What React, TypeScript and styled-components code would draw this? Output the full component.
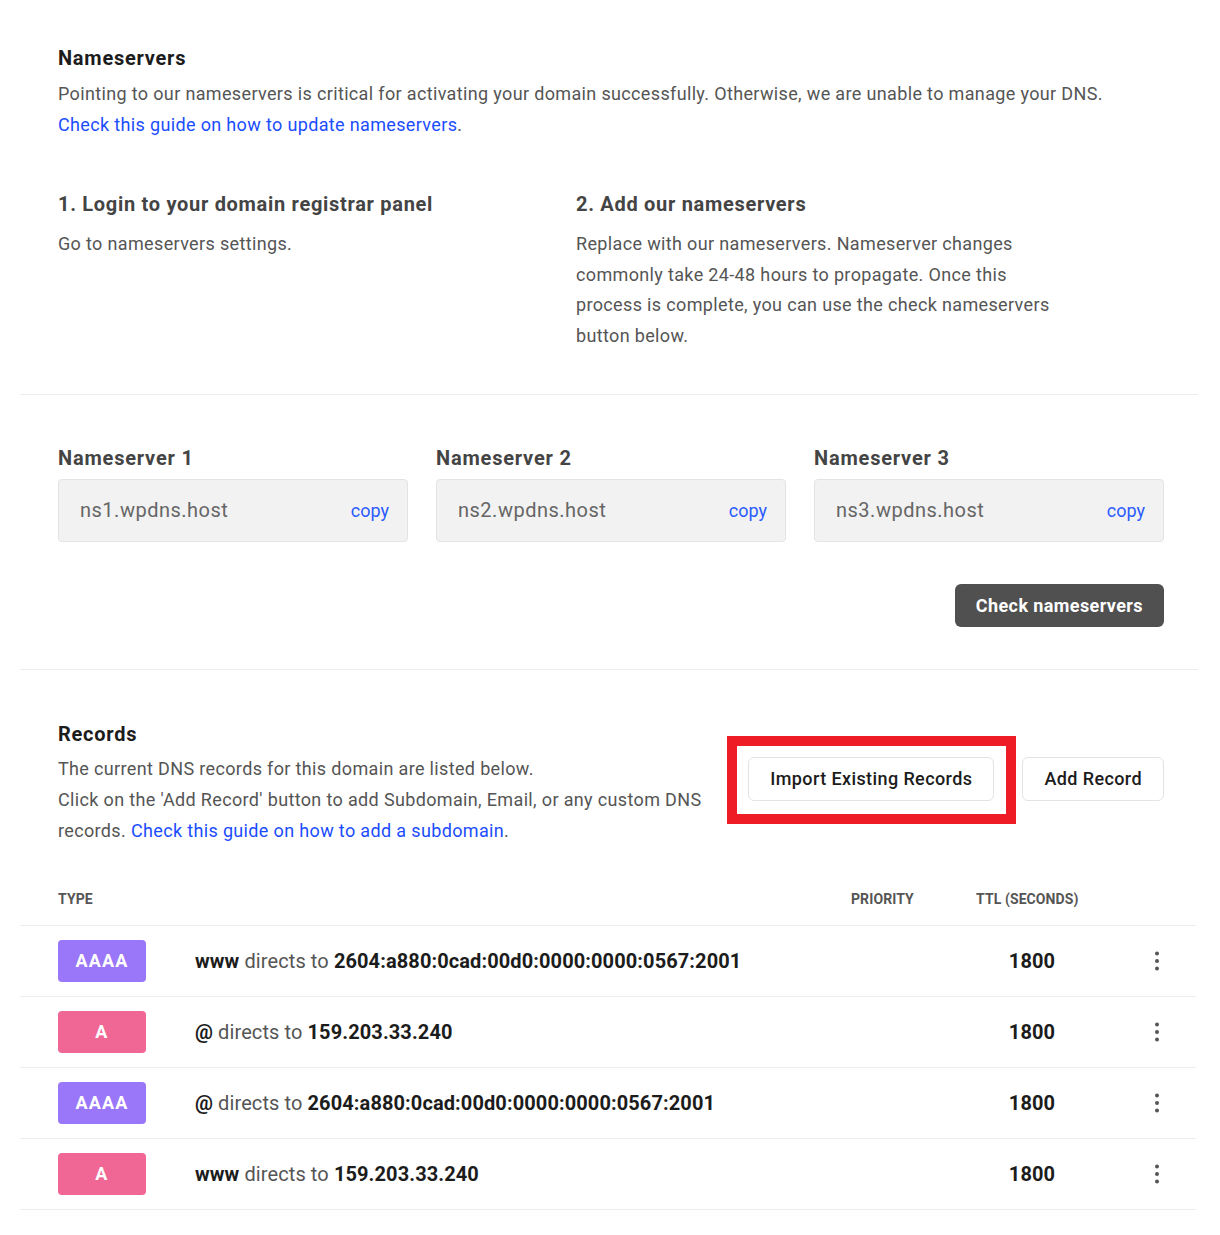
import React from "react";
import styled, { createGlobalStyle } from "styled-components";

const Global = createGlobalStyle`
  html, body { margin: 0; padding: 0; background: #fff; }
  body { font-family: Roboto, "Noto Sans", "Liberation Sans", sans-serif; -webkit-font-smoothing: antialiased; }
  * { box-sizing: border-box; }
`;

const Page = styled.div`
  padding: 46px 22px 40px 20px;
`;

const Section = styled.section`
  padding: 0 34px 0 38px;
`;

const Divider = styled.hr`
  border: none;
  border-top: 1px solid #ececec;
  margin: 0;
`;

const Title = styled.h2`
  margin: 0;
  font-size: 20px;
  line-height: 24px;
  font-weight: 700;
  letter-spacing: 0.75px;
  color: #1c1c1c;
`;

const Text = styled.p`
  margin: 8px 0 0;
  font-size: 18px;
  line-height: 31px;
  letter-spacing: 0.35px;
  color: #555;
`;

const Link = styled.a`
  color: #1b4dff;
  text-decoration: none;
`;

const Steps = styled.div`
  display: grid;
  grid-template-columns: 488px 488px;
  column-gap: 30px;
  padding: 52px 0 42px;
`;

const StepTitle = styled.h3`
  margin: 0;
  font-size: 20px;
  line-height: 24px;
  font-weight: 700;
  letter-spacing: 0.7px;
  color: #444;
`;

const StepText = styled.p`
  margin: 13px 0 0;
  font-size: 18px;
  line-height: 30.7px;
  letter-spacing: 0.35px;
  color: #555;
`;

const NsGrid = styled.div`
  display: grid;
  grid-template-columns: repeat(3, 1fr);
  column-gap: 28px;
  padding-top: 51px;
`;

const NsLabel = styled.div`
  font-size: 20px;
  line-height: 24px;
  font-weight: 700;
  letter-spacing: 0.8px;
  color: #444;
  margin-bottom: 9px;
`;

const NsBox = styled.div`
  height: 63px;
  display: flex;
  align-items: center;
  justify-content: space-between;
  padding: 0 18px 0 21px;
  background: #f2f2f2;
  border: 1px solid #e3e3e3;
  border-radius: 4px;
`;

const NsValue = styled.span`
  font-size: 20px;
  letter-spacing: 0.5px;
  color: #666;
`;

const CopyBtn = styled.button`
  border: none;
  background: none;
  padding: 0;
  font-family: inherit;
  font-size: 18px;
  color: #2b5bff;
  cursor: pointer;
`;

const ButtonRow = styled.div`
  display: flex;
  justify-content: flex-end;
  padding: 42px 0 42px;
`;

const DarkButton = styled.button`
  height: 43px;
  padding: 0 21px;
  border: none;
  border-radius: 6px;
  background: #505050;
  color: #fff;
  font-family: inherit;
  font-size: 18px;
  font-weight: 700;
  letter-spacing: 0.4px;
  cursor: pointer;
`;

const RecordsHead = styled.div`
  display: flex;
  align-items: center;
  justify-content: space-between;
  padding-top: 52px;
`;

const RecordsIntro = styled.div`
  flex: 1;
`;

const RecordsText = styled.p`
  margin: 7px 0 0;
  font-size: 18px;
  line-height: 31px;
  letter-spacing: 0.35px;
  color: #555;
  max-width: 690px;
`;

const Actions = styled.div`
  display: flex;
  gap: 28px;
  margin-top: -10px;
`;

const Highlight = styled.div`
  position: relative;
  display: flex;
`;

const HighlightFrame = styled.span`
  position: absolute;
  top: -21px;
  left: -21px;
  right: -22px;
  bottom: -23px;
  border: 10px solid #ee1c25;
  pointer-events: none;
`;

const OutlineButton = styled.button`
  height: 44px;
  padding: 0 21px;
  background: #fff;
  border: 1px solid #e3e3e3;
  border-radius: 6px;
  font-family: inherit;
  font-size: 18px;
  font-weight: 500;
  letter-spacing: 0.4px;
  color: #1c1c1c;
  cursor: pointer;
`;

const Table = styled.div`
  margin-top: 45px;
  margin-right: 2px;
`;

const cols = "38px 137px 1fr 125px 112px 108px";

const HeadRow = styled.div`
  display: grid;
  grid-template-columns: ${cols};
  padding-bottom: 18px;
  border-bottom: 1px solid #ececec;
`;

const HeadCell = styled.div`
  font-size: 14px;
  line-height: 16px;
  font-weight: 700;
  letter-spacing: 0.1px;
  color: #555;
  text-transform: uppercase;
`;

const Row = styled.div`
  display: grid;
  grid-template-columns: ${cols};
  align-items: center;
  height: 71px;
  border-bottom: 1px solid #ececec;
`;

const Badge = styled.span<{ $kind: "AAAA" | "A" }>`
  display: flex;
  align-items: center;
  justify-content: center;
  width: 88px;
  height: 42px;
  border-radius: 4px;
  background: ${(p) => (p.$kind === "AAAA" ? "#9a77f9" : "#f06694")};
  color: #fff;
  font-size: 18px;
  font-weight: 700;
  letter-spacing: 1.2px;
`;

const Desc = styled.div`
  font-size: 20px;
  letter-spacing: 0.1px;
  color: #555;
  white-space: nowrap;
`;

const Strong = styled.b`
  font-weight: 700;
  color: #1c1c1c;
`;

const Ttl = styled.div`
  font-size: 20px;
  font-weight: 700;
  letter-spacing: 0.1px;
  color: #1c1c1c;
  text-align: center;
`;

const MenuBtn = styled.button`
  justify-self: end;
  margin-right: 27px;
  width: 24px;
  height: 24px;
  padding: 0;
  border: none;
  background: none;
  display: flex;
  align-items: center;
  justify-content: center;
  cursor: pointer;
`;

const Spacer = styled.div``;

const Dots = () => (
  <svg width="24" height="24" viewBox="0 0 24 24" fill="#555">
    <circle cx="12" cy="4.5" r="2" />
    <circle cx="12" cy="12" r="2" />
    <circle cx="12" cy="19.5" r="2" />
  </svg>
);

const nameservers = ["ns1.wpdns.host", "ns2.wpdns.host", "ns3.wpdns.host"];

const records: { type: "AAAA" | "A"; host: string; value: string }[] = [
  { type: "AAAA", host: "www", value: "2604:a880:0cad:00d0:0000:0000:0567:2001" },
  { type: "A", host: "@", value: "159.203.33.240" },
  { type: "AAAA", host: "@", value: "2604:a880:0cad:00d0:0000:0000:0567:2001" },
  { type: "A", host: "www", value: "159.203.33.240" },
];

export default function App() {
  return (
    <>
      <Global />
      <Page>
        <Section>
          <Title>Nameservers</Title>
          <Text>
            Pointing to our nameservers is critical for activating your domain successfully. Otherwise, we are unable to
            manage your DNS.
            <br />
            <Link href="#">Check this guide on how to update nameservers</Link>.
          </Text>
          <Steps>
            <div>
              <StepTitle>1. Login to your domain registrar panel</StepTitle>
              <StepText>Go to nameservers settings.</StepText>
            </div>
            <div>
              <StepTitle>2. Add our nameservers</StepTitle>
              <StepText>
                Replace with our nameservers. Nameserver changes commonly take 24-48 hours to propagate. Once this
                process is complete, you can use the check nameservers button below.
              </StepText>
            </div>
          </Steps>
        </Section>
        <Divider />
        <Section>
          <NsGrid>
            {nameservers.map((ns, i) => (
              <div key={ns}>
                <NsLabel>Nameserver {i + 1}</NsLabel>
                <NsBox>
                  <NsValue>{ns}</NsValue>
                  <CopyBtn>copy</CopyBtn>
                </NsBox>
              </div>
            ))}
          </NsGrid>
          <ButtonRow>
            <DarkButton>Check nameservers</DarkButton>
          </ButtonRow>
        </Section>
        <Divider />
        <Section>
          <RecordsHead>
            <RecordsIntro>
              <Title>Records</Title>
              <RecordsText>
                The current DNS records for this domain are listed below.
                <br />
                Click on the 'Add Record' button to add Subdomain, Email, or any custom DNS records.{" "}
                <Link href="#">Check this guide on how to add a subdomain</Link>.
              </RecordsText>
            </RecordsIntro>
            <Actions>
              <Highlight>
                <OutlineButton>Import Existing Records</OutlineButton>
                <HighlightFrame />
              </Highlight>
              <OutlineButton>Add Record</OutlineButton>
            </Actions>
          </RecordsHead>
        </Section>
        <Table>
          <HeadRow>
            <Spacer />
            <HeadCell>Type</HeadCell>
            <Spacer />
            <HeadCell>Priority</HeadCell>
            <HeadCell>TTL (Seconds)</HeadCell>
            <Spacer />
          </HeadRow>
          {records.map((r, i) => (
            <Row key={i}>
              <Spacer />
              <Badge $kind={r.type}>{r.type}</Badge>
              <Desc>
                <Strong>{r.host}</Strong> directs to <Strong>{r.value}</Strong>
              </Desc>
              <Spacer />
              <Ttl>1800</Ttl>
              <MenuBtn aria-label="More">
                <Dots />
              </MenuBtn>
            </Row>
          ))}
        </Table>
      </Page>
    </>
  );
}
